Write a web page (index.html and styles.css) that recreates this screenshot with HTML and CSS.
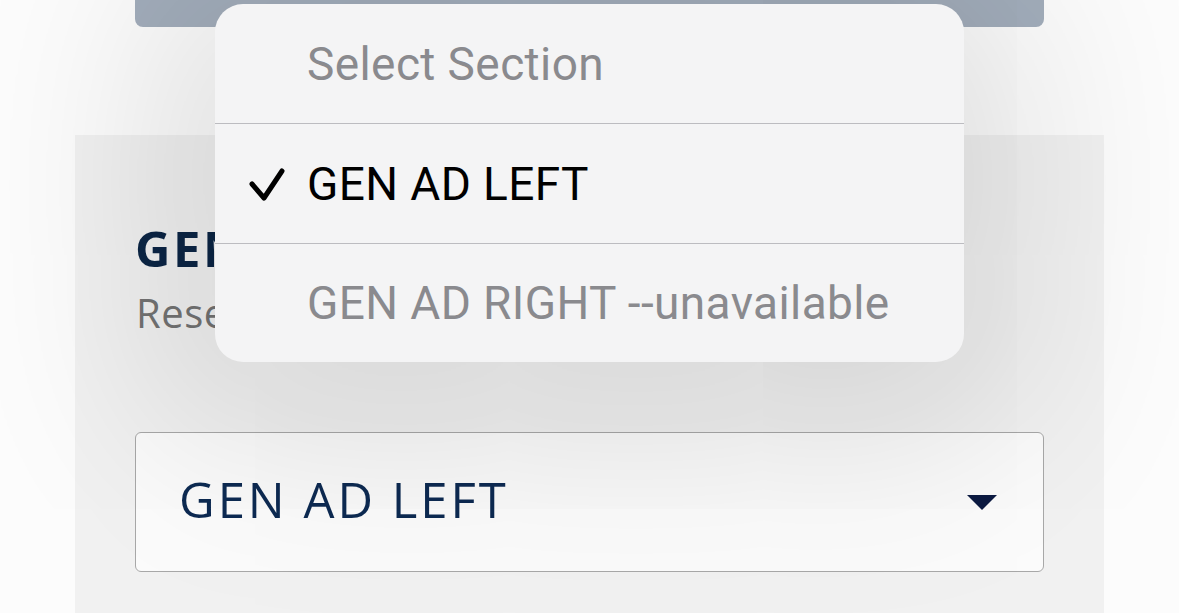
FILE: index.html
```html
<!DOCTYPE html>
<html lang="en">
<head>
<meta charset="utf-8">
<title>Select Section</title>
<link rel="stylesheet" href="styles.css">
</head>
<body>
<div class="frame">
  <div class="topbar"></div>
  <section class="panel">
    <h2 class="panel-title">GEN AD LEFT</h2>
    <p class="panel-sub">Reserve your section</p>
    <div class="select-box">
      <span class="select-value">GEN AD LEFT</span>
      <span class="select-caret"></span>
    </div>
  </section>
</div>
<div class="menu">
  <div class="menu-row menu-row-title"><span class="menu-label">Select Section</span></div>
  <div class="menu-row menu-row-selected">
    <svg class="menu-check" viewBox="0 0 36 34" width="36" height="34"><polyline points="3,17 15,31 33,4" fill="none" stroke="#000" stroke-width="5" stroke-linecap="round" stroke-linejoin="round"/></svg>
    <span class="menu-label">GEN AD LEFT</span>
  </div>
  <div class="menu-row menu-row-disabled"><span class="menu-label">GEN AD RIGHT --unavailable</span></div>
</div>
</body>
</html>
```
FILE: styles.css
```css
html, body {
  margin: 0;
  padding: 0;
}
body {
  width: 1179px;
  height: 613px;
  overflow: hidden;
  background: #fcfcfc;
  position: relative;
}
.frame {
  margin-left: 75px;
  width: 1029px;
  display: flex;
  flex-direction: column;
  height: 613px;
}
.topbar {
  margin: 0 60px;
  height: 27px;
  background: #a3aebc;
  border-radius: 0 0 8px 8px;
}
.panel {
  margin-top: 108px;
  flex: 1;
  background: #f1f1f1;
  padding: 83px 60px 0 60px;
}
.panel-title {
  margin: 0;
  font-family: "Open Sans", sans-serif;
  font-weight: 700;
  font-size: 49px;
  line-height: 60px;
  color: #0b2545;
  letter-spacing: 2.5px;
}
.panel-sub {
  margin: 11px 0 0 1px;
  font-family: "Open Sans", sans-serif;
  font-weight: 400;
  font-size: 40px;
  line-height: 48px;
  color: #737373;
  letter-spacing: 0.5px;
}
.select-box {
  margin-top: 95px;
  border: 1px solid #a8a8a8;
  border-radius: 6px;
  background: #fbfbfb;
  display: flex;
  align-items: center;
  justify-content: space-between;
  padding: 0 46px 6px 43px;
  box-sizing: content-box;
  height: 132px;
}
.select-value {
  font-family: "Open Sans", sans-serif;
  font-size: 49px;
  line-height: 60px;
  color: #0d2a52;
  letter-spacing: 3px;
}
.select-caret {
  width: 0;
  height: 0;
  border-left: 15px solid transparent;
  border-right: 15px solid transparent;
  border-top: 15px solid #0c1a42;
  margin-top: 6px;
}
.menu {
  position: absolute;
  left: 215px;
  top: 4px;
  width: 749px;
  height: 358px;
  background: #f4f4f5;
  border-radius: 28px;
  box-shadow: 0 20px 200px 60px rgba(0, 0, 0, 0.12);
  display: flex;
  flex-direction: column;
  overflow: hidden;
}
.menu-row {
  height: 119px;
  display: flex;
  align-items: center;
  padding-left: 92px;
  position: relative;
  border-bottom: 1px solid #bcbcc0;
  flex: none;
}
.menu-row:last-child {
  border-bottom: none;
  height: 118px;
}
.menu-label {
  font-family: Roboto, "Liberation Sans", sans-serif;
  font-size: 46px;
  line-height: 54px;
  color: #8a8a8e;
  letter-spacing: 0.4px;
}
.menu-row-selected .menu-label {
  color: #000;
}
.menu-check {
  position: absolute;
  left: 34px;
  top: 43px;
}
```
